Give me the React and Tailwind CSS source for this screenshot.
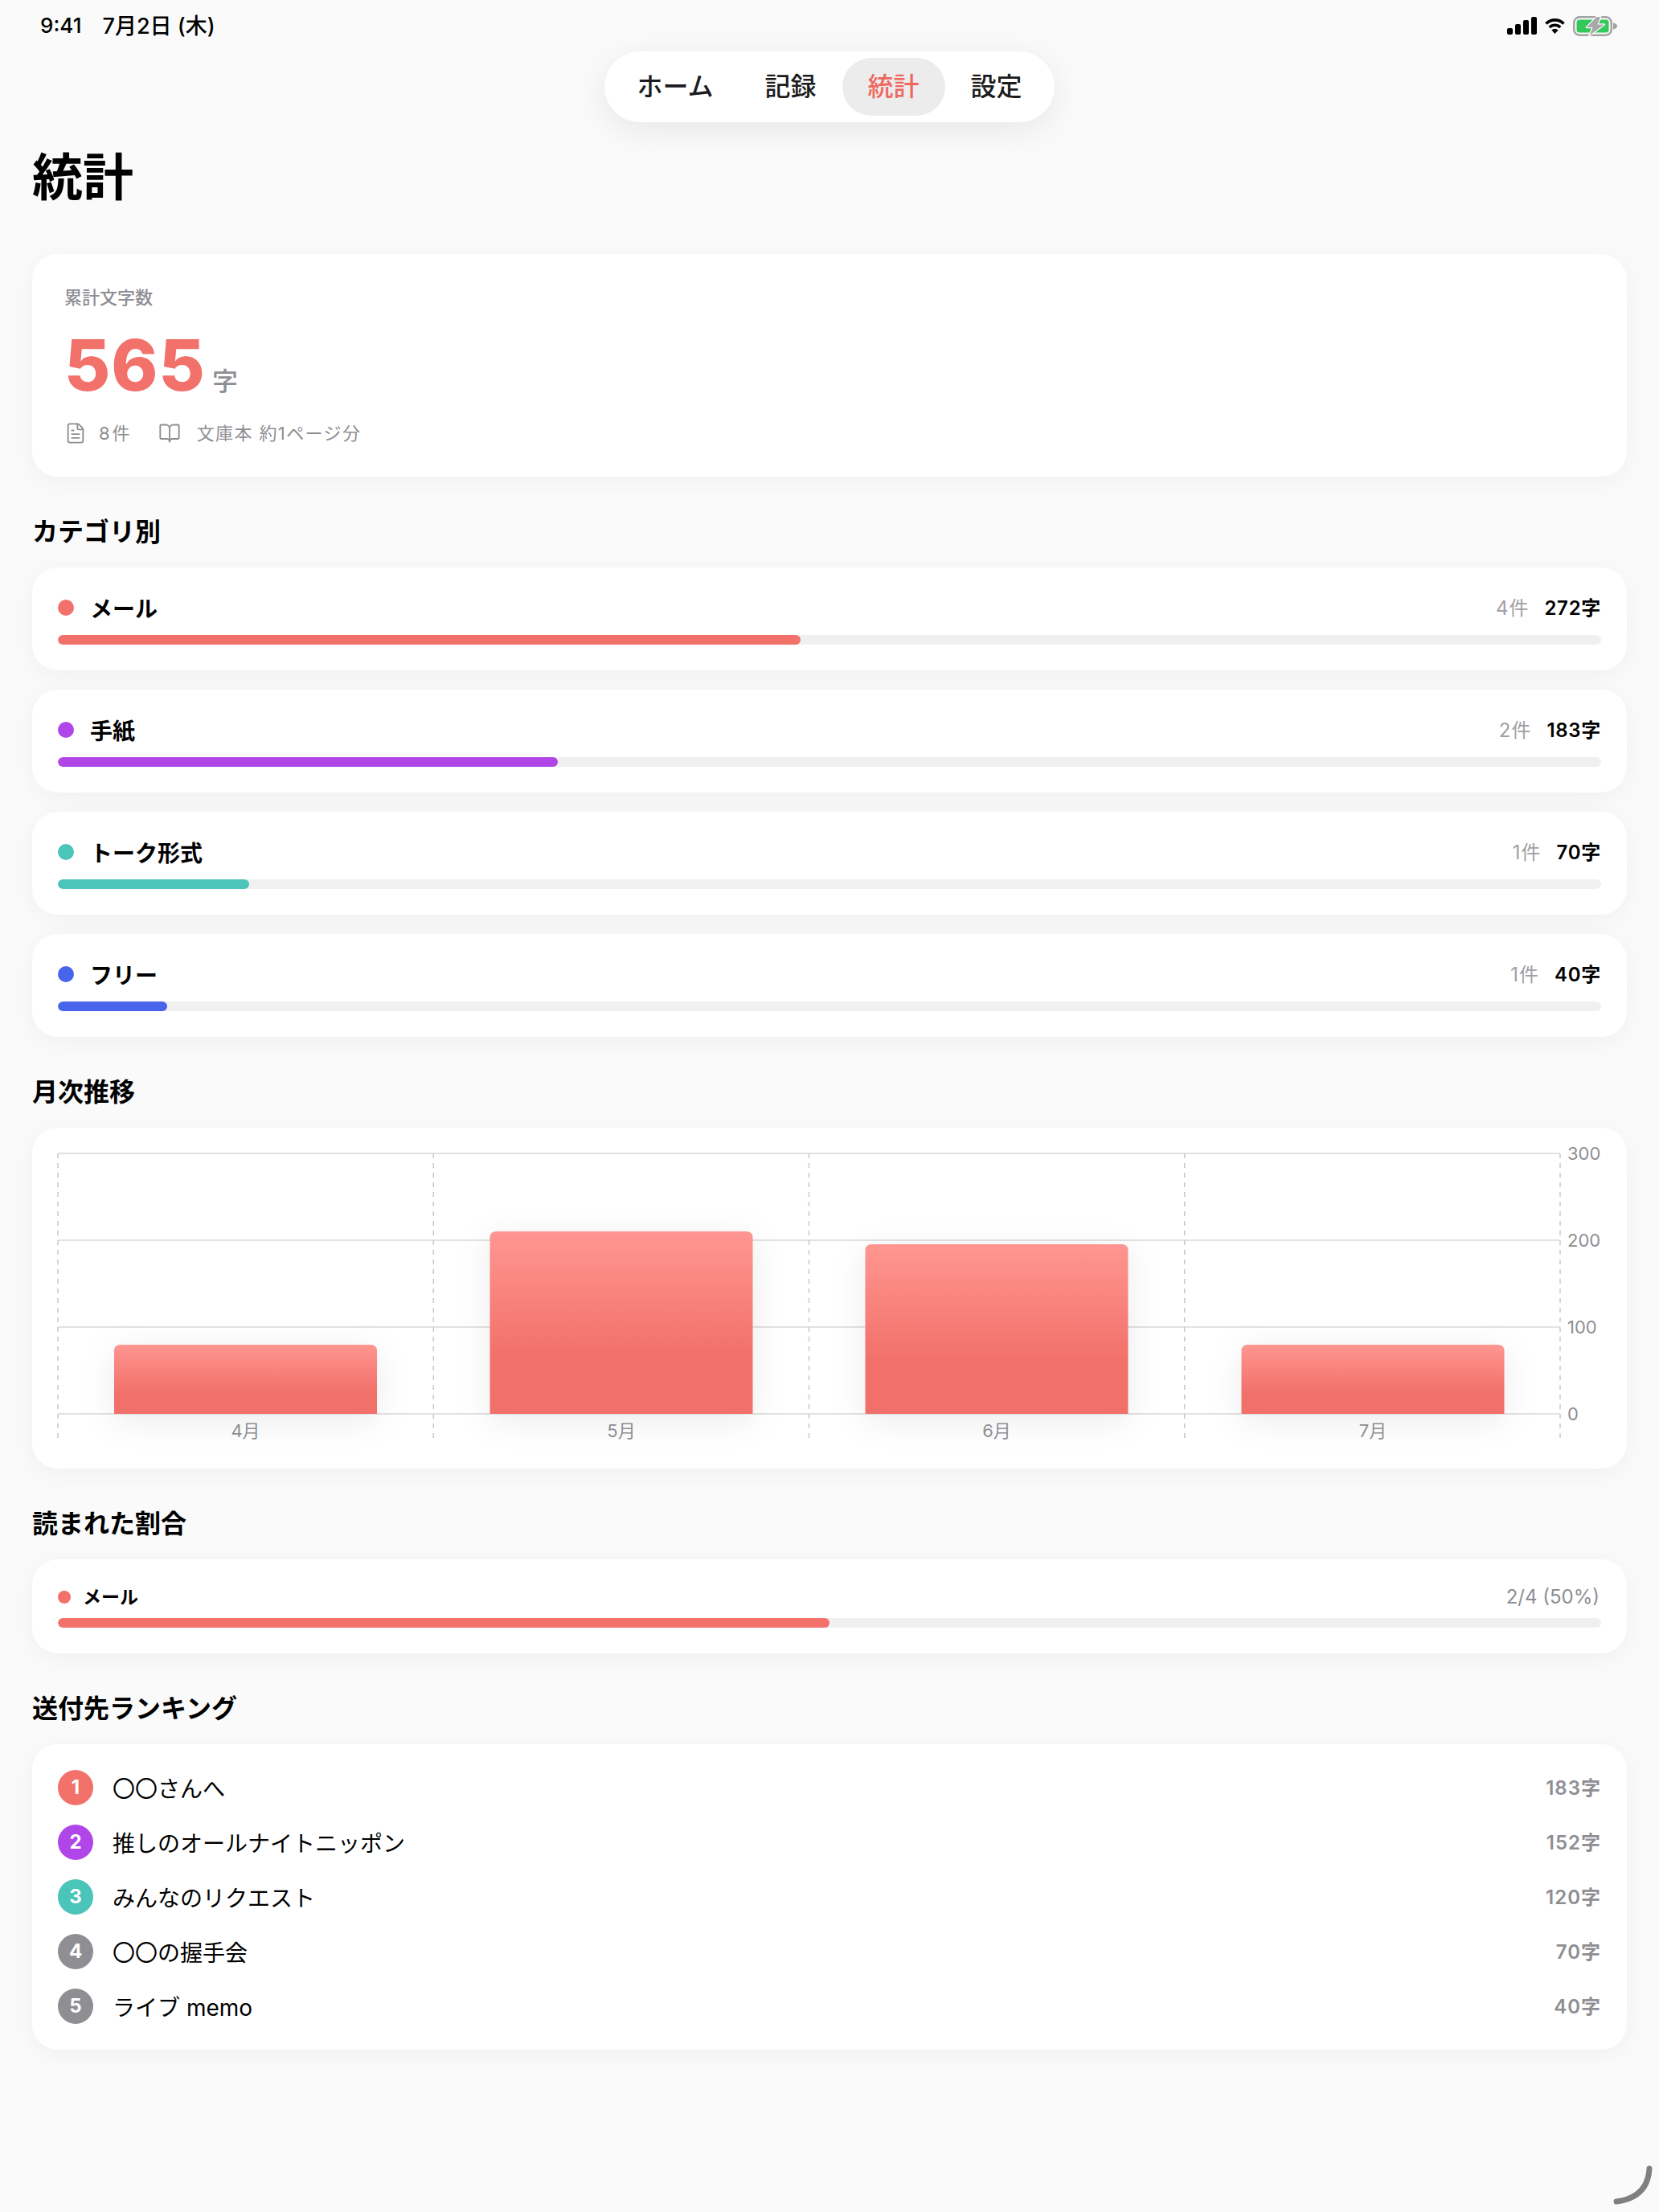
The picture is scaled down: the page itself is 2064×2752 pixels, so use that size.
import React from "react";
import { FileText, BookOpen } from "lucide-react";

const categories = [
  { name: "メール", count: "4件", chars: "272字", color: "bg-[#f2716a]", pct: 48.14 },
  { name: "手紙", count: "2件", chars: "183字", color: "bg-[#b146e8]", pct: 32.39 },
  { name: "トーク形式", count: "1件", chars: "70字", color: "bg-[#4bc4b9]", pct: 12.39 },
  { name: "フリー", count: "1件", chars: "40字", color: "bg-[#4864ea]", pct: 7.08 },
];
const ranking = [
  { n: 1, name: "〇〇さんへ", chars: "183字", color: "bg-[#f2716a]" },
  { n: 2, name: "推しのオールナイトニッポン", chars: "152字", color: "bg-[#b146e8]" },
  { n: 3, name: "みんなのリクエスト", chars: "120字", color: "bg-[#4bc4b9]" },
  { n: 4, name: "〇〇の握手会", chars: "70字", color: "bg-[#8e8e93]" },
  { n: 5, name: "ライブ memo", chars: "40字", color: "bg-[#8e8e93]" },
];
const bars = [
  { label: "4月", x: 70, h: 86 },
  { label: "5月", x: 537.5, h: 227 },
  { label: "6月", x: 1004.5, h: 211 },
  { label: "7月", x: 1472.5, h: 86 },
];
const gridY = [
  { y: 0, label: "300" },
  { y: 108, label: "200" },
  { y: 216, label: "100" },
  { y: 324, label: "0" },
];
const gridX = [0, 467.25, 934.5, 1401.75, 1869];

function Card({ className = "", children }) {
  return (
    <div className={"bg-white rounded-[32px] shadow-[0_6px_32px_rgba(0,0,0,0.045)] " + className}>{children}</div>
  );
}

function SectionTitle({ children }) {
  return (
    <h2 className="mt-[45px] mb-6 flex h-11 items-center pt-[3px] text-[32px] font-bold leading-none text-black">{children}</h2>
  );
}

function Track({ pct, color }) {
  return (
    <div className="h-3 rounded-full bg-[#f0f0f0] overflow-hidden">
      <div className={"h-full rounded-full " + color} style={{ width: pct + "%" }} />
    </div>
  );
}

function StatusIcons() {
  return (
    <div className="flex items-center gap-2">
      <svg width="37" height="22" viewBox="0 0 37 22" fill="#000">
        <rect x="0" y="14" width="7" height="8" rx="2" />
        <rect x="10" y="9" width="7" height="13" rx="2" />
        <rect x="20" y="4" width="7" height="18" rx="2" />
        <rect x="30" y="0" width="7" height="22" rx="2" />
      </svg>
      <svg width="29" height="20" viewBox="0 0 29 20" fill="none" stroke="#000" strokeWidth="3.6">
        <path d="M3.5 7.5 A15.5 15.5 0 0 1 25.5 7.5" />
        <path d="M7.8 12 A9.5 9.5 0 0 1 21.2 12" />
        <path d="M14.5 20 L10.4 15.4 A6 6 0 0 1 18.6 15.4 Z" fill="#000" stroke="none" />
      </svg>
      <svg width="55" height="25" viewBox="0 0 55 25" fill="none">
        <rect x="1.25" y="1.25" width="46.5" height="22.5" rx="7" stroke="#a3a3a3" strokeWidth="2.5" />
        <rect x="4.5" y="4.5" width="40" height="16" rx="3.5" fill="#34c759" />
        <path d="M50 8.5 C53 9 55 10.5 55 12.5 C55 14.5 53 16 50 16.5 Z" fill="#a3a3a3" />
        <path
          d="M29.5 1 L17 14 H24.5 L20.5 24 L39 10.5 H30.5 L34 1 Z"
          fill="#a8a8a8"
          stroke="#fafafa"
          strokeWidth="2.5"
          paintOrder="stroke"
          strokeLinejoin="round"
        />
      </svg>
    </div>
  );
}

function Chart() {
  return (
    <svg width="1920" height="360" viewBox="0 0 1920 360" className="block overflow-visible">
      <defs>
        <linearGradient id="barFill" x1="0" y1="0" x2="0" y2="1">
          <stop offset="0" stopColor="#ff9691" />
          <stop offset="0.69" stopColor="#f2706a" />
          <stop offset="1" stopColor="#f2706a" />
        </linearGradient>
      </defs>
      {gridY.map((g) => (
        <line key={g.y} x1="0" x2="1869" y1={g.y} y2={g.y} stroke="#e2e2e2" strokeWidth="2" />
      ))}
      {gridX.map((x) => (
        <line key={x} x1={x} x2={x} y1="0" y2="354" stroke="#c9c9c9" strokeWidth="1.5" strokeDasharray="6 6" />
      ))}
      {bars.map((b) => (
        <path
          key={b.label}
          d={`M${b.x} 324 V${324 - b.h + 8} Q${b.x} ${324 - b.h} ${b.x + 8} ${324 - b.h} H${b.x + 319} Q${b.x + 327} ${324 - b.h} ${b.x + 327} ${324 - b.h + 8} V324 Z`}
          fill="url(#barFill)"
          className="drop-shadow-[0_8px_20px_rgba(0,0,0,0.08)]"
        />
      ))}
      {bars.map((b) => (
        <text key={b.label} x={b.x + 163.5} y="345" textAnchor="middle" dominantBaseline="central" fill="#8e8e93" fontSize="22">
          {b.label}
        </text>
      ))}
      {gridY.map((g) => (
        <text key={g.label} x="1878" y={g.y} dominantBaseline="central" fill="#8e8e93" fontSize="22">
          {g.label}
        </text>
      ))}
    </svg>
  );
}

export default function App() {
  return (
    <div className="relative h-[2752px] w-[2064px] overflow-hidden bg-[#fafafa] px-10 font-['Inter','Noto_Sans_CJK_JP',sans-serif] text-black [font-kerning:normal]">
      {/* status bar */}
      <div className="-mx-10 flex h-16 items-center justify-between pl-[50px] pr-[52px]">
        <div className="flex items-center gap-[26px] text-[26px] font-medium leading-none">
          <span>9:41</span>
          <span className="text-[27px]">7月2日 (木)</span>
        </div>
        <StatusIcons />
      </div>

      {/* nav */}
      <div className="flex justify-center">
        <nav className="flex h-[88px] items-center rounded-full bg-white p-2 shadow-[0_10px_44px_rgba(0,0,0,0.08)] text-[32px] font-medium leading-none text-[#1c1c1e]">
          <span className="flex h-[72px] items-center rounded-full px-8">ホーム</span>
          <span className="flex h-[72px] items-center rounded-full px-8">記録</span>
          <span className="flex h-[72px] items-center rounded-full bg-[#ececec] px-8 text-[#f0665f]">統計</span>
          <span className="flex h-[72px] items-center rounded-full px-8">設定</span>
        </nav>
      </div>

      <h1 className="mt-7 flex h-20 items-center text-[63px] font-bold leading-none text-black">統計</h1>

      {/* total */}
      <Card className="mt-14 px-10 pb-10 pt-10">
        <div className="text-[22px] font-medium leading-7 text-[#8e8e93]">累計文字数</div>
        <div className="mt-[26px] flex h-[88px] items-baseline">
          <span className="text-[88px] font-extrabold tracking-[1px] leading-[88px] text-[#f2716a]">565</span>
          <span className="ml-[8px] text-[32px] font-medium leading-none text-[#8e8e93]">字</span>
        </div>
        <div className="mt-[27px] flex h-7 items-center text-[22px] leading-none text-[#8e8e93]">
          <FileText size={28} strokeWidth={1.6} className="text-[#8e8e93]" />
          <span className="ml-[15px] tracking-[3px]">8件</span>
          <BookOpen size={28} strokeWidth={1.6} className="ml-[32px] text-[#8e8e93]" />
          <span className="ml-[20px] tracking-[1.4px]">文庫本 約1ページ分</span>
        </div>
      </Card>

      {/* categories */}
      <SectionTitle>カテゴリ別</SectionTitle>
      <div className="flex flex-col gap-6">
        {categories.map((c) => (
          <Card key={c.name} className="px-8 py-8">
            <div className="mb-4 flex h-9 items-center">
              <span className={"h-5 w-5 rounded-full " + c.color} />
              <span className="ml-5 pt-[3px] text-[28px] font-bold leading-none">{c.name}</span>
              <span className="ml-auto pt-[2px] text-[24px] tracking-[1px] leading-none text-[#a0a0a4]">{c.count}</span>
              <span className="ml-[19px] pt-[2px] text-[24px] font-semibold tracking-[0.7px] leading-none">{c.chars}</span>
            </div>
            <Track pct={c.pct} color={c.color} />
          </Card>
        ))}
      </div>

      {/* monthly */}
      <SectionTitle>月次推移</SectionTitle>
      <Card className="h-[424px] px-8 pt-8">
        <Chart />
      </Card>

      {/* read ratio */}
      <SectionTitle>読まれた割合</SectionTitle>
      <Card className="px-8 py-8">
        <div className="mb-[11px] flex h-[30px] items-center">
          <span className="h-4 w-4 rounded-full bg-[#f2716a]" />
          <span className="ml-[15px] text-[23px] font-bold leading-none">メール</span>
          <span className="ml-auto mr-[2px] text-[24px] leading-none text-[#8e8e93]">2/4 (50%)</span>
        </div>
        <Track pct={50} color="bg-[#f2716a]" />
      </Card>

      {/* ranking */}
      <SectionTitle>送付先ランキング</SectionTitle>
      <Card className="flex flex-col gap-6 px-8 py-8">
        {ranking.map((r) => (
          <div key={r.n} className="flex h-11 items-center">
            <span className={"flex h-11 w-11 items-center justify-center rounded-full text-[24px] font-bold leading-none text-white " + r.color}>
              {r.n}
            </span>
            <span className="ml-6 pt-[3px] text-[28px] leading-none text-black">{r.name}</span>
            <span className="ml-auto pt-[2px] text-[24px] font-semibold tracking-[1px] leading-none text-[#8e8e93]">{r.chars}</span>
          </div>
        ))}
      </Card>

      {/* home indicator corner */}
      <svg width="64" height="62" viewBox="0 0 64 62" fill="none" className="absolute bottom-0 right-0">
        <path d="M11 49 Q50 44 52 8" stroke="#808080" strokeWidth="7" strokeLinecap="round" />
      </svg>
    </div>
  );
}
